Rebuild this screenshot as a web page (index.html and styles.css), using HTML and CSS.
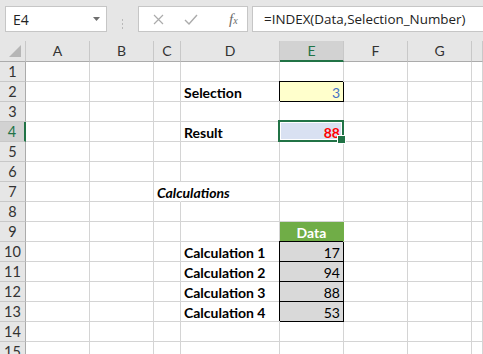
FILE: index.html
```html
<!DOCTYPE html>
<html lang="en">
<head>
    <meta charset="UTF-8">
    <meta name="viewport" content="width=device-width, initial-scale=1.0">
    <link rel="stylesheet" href="styles.css">
</head>
<body>
    <div class="toolbar">
        <div class="namebox">
            <span>E4</span>
            <svg class="drop" width="7" height="4" viewBox="0 0 7 4"><path d="M0 0h7L3.5 4z" fill="#6e6e6e"/></svg>
        </div>
        <div class="sep">
            <svg width="3" height="12" viewBox="0 0 3 12"><rect x="1" y="1" width="1" height="2" fill="#b9b9b9"/><rect x="1" y="5" width="1" height="2" fill="#b9b9b9"/><rect x="1" y="9" width="1" height="2" fill="#b9b9b9"/></svg>
        </div>
        <div class="fnbox">
            <svg width="11" height="11" viewBox="0 0 11 11"><path d="M1 1l9 9M10 1l-9 9" stroke="#ababab" stroke-width="1.2"/></svg>
            <svg width="14" height="11" viewBox="0 0 14 11"><path d="M1 6l4 4 8-9" stroke="#ababab" stroke-width="1.4" fill="none"/></svg>
            <span class="fx">f<sub>x</sub></span>
        </div>
        <div class="formula">=INDEX(Data,Selection_Number)</div>
    </div>

    <div class="sheet">
        <div class="ch corner"><span class="tri"></span></div><div class="ch">A</div><div class="ch">B</div><div class="ch">C</div><div class="ch">D</div><div class="ch active">E</div><div class="ch">F</div><div class="ch">G</div><div class="ch"></div>

        <div class="rh">1</div><div class="c"></div><div class="c"></div><div class="c"></div><div class="c"></div><div class="c"></div><div class="c"></div><div class="c"></div><div class="c"></div>
        <div class="rh">2</div><div class="c"></div><div class="c"></div><div class="c"></div><div class="c lbl">Selection</div><div class="c num input">3</div><div class="c"></div><div class="c"></div><div class="c"></div>
        <div class="rh">3</div><div class="c"></div><div class="c"></div><div class="c"></div><div class="c"></div><div class="c"></div><div class="c"></div><div class="c"></div><div class="c"></div>
        <div class="rh active">4</div><div class="c"></div><div class="c"></div><div class="c"></div><div class="c lbl">Result</div><div class="c num result sel">88</div><div class="c"></div><div class="c"></div><div class="c"></div>
        <div class="rh">5</div><div class="c"></div><div class="c"></div><div class="c"></div><div class="c"></div><div class="c"></div><div class="c"></div><div class="c"></div><div class="c"></div>
        <div class="rh">6</div><div class="c"></div><div class="c"></div><div class="c"></div><div class="c"></div><div class="c"></div><div class="c"></div><div class="c"></div><div class="c"></div>
        <div class="rh">7</div><div class="c"></div><div class="c"></div><div class="c lbl title">Calculations</div><div class="c"></div><div class="c"></div><div class="c"></div><div class="c"></div><div class="c"></div>
        <div class="rh">8</div><div class="c"></div><div class="c"></div><div class="c"></div><div class="c"></div><div class="c"></div><div class="c"></div><div class="c"></div><div class="c"></div>
        <div class="rh">9</div><div class="c"></div><div class="c"></div><div class="c"></div><div class="c"></div><div class="c data-head">Data</div><div class="c"></div><div class="c"></div><div class="c"></div>
        <div class="rh">10</div><div class="c"></div><div class="c"></div><div class="c"></div><div class="c lbl">Calculation 1</div><div class="c num data">17</div><div class="c"></div><div class="c"></div><div class="c"></div>
        <div class="rh">11</div><div class="c"></div><div class="c"></div><div class="c"></div><div class="c lbl">Calculation 2</div><div class="c num data">94</div><div class="c"></div><div class="c"></div><div class="c"></div>
        <div class="rh">12</div><div class="c"></div><div class="c"></div><div class="c"></div><div class="c lbl">Calculation 3</div><div class="c num data">88</div><div class="c"></div><div class="c"></div><div class="c"></div>
        <div class="rh">13</div><div class="c"></div><div class="c"></div><div class="c"></div><div class="c lbl">Calculation 4</div><div class="c num data">53</div><div class="c"></div><div class="c"></div><div class="c"></div>
        <div class="rh">14</div><div class="c"></div><div class="c"></div><div class="c"></div><div class="c"></div><div class="c"></div><div class="c"></div><div class="c"></div><div class="c"></div>
        <div class="rh">15</div><div class="c"></div><div class="c"></div><div class="c"></div><div class="c"></div><div class="c"></div><div class="c"></div><div class="c"></div><div class="c"></div>
    </div>
</body>
</html>
```

FILE: styles.css
```css
* {
    box-sizing: border-box;
}
body {
    margin: 0;
    width: 483px;
    height: 354px;
    overflow: hidden;
    background-color: #ffffff;
    font-family: Lato, "Open Sans", sans-serif;
}
.toolbar {
    display: flex;
    height: 41px;
    padding: 6px 0 0 5px;
    background-color: #e6e6e6;
}
.namebox,
.fnbox,
.formula {
    height: 26px;
    background-color: #ffffff;
    border: 1px solid #c6c6c6;
}
.namebox {
    width: 102px;
    display: flex;
    align-items: center;
    justify-content: space-between;
    padding: 0 6px 0 7px;
    font-family: "Open Sans", sans-serif;
    font-size: 14px;
    color: #222222;
}
.sep {
    width: 31px;
    display: flex;
    align-items: center;
    justify-content: center;
}
.fnbox {
    width: 110px;
    display: flex;
    align-items: center;
    padding: 0 0 0 14px;
    gap: 20px;
}
.fx {
    margin-left: 11px;
    font-family: "Liberation Serif", serif;
    font-style: italic;
    font-size: 15px;
    color: #6b6b6b;
}
.fx sub {
    font-size: 10px;
    vertical-align: 0;
}
.formula {
    flex: 1;
    margin-left: 4px;
    border-right: none;
    padding: 0 0 0 11px;
    font-family: "Open Sans", sans-serif;
    font-size: 13.4px;
    line-height: 24px;
    color: #222222;
    white-space: nowrap;
}
.sheet {
    display: grid;
    grid-template-columns: 26px 64px 64px 27px 99px 64px 64px 64px 1fr;
    grid-template-rows: 21px repeat(15, 20px);
    font-size: 14px;
}
.ch,
.rh {
    background-color: #e6e6e6;
    color: #333333;
    text-align: center;
    border-right: 1px solid #c8c8c8;
    border-bottom: 1px solid #c8c8c8;
}
.ch {
    line-height: 20px;
    border-bottom-color: #ababab;
}
.rh {
    line-height: 20px;
    font-size: 14.5px;
    border-right-color: #ababab;
}
.ch.active,
.rh.active {
    background-color: #d2d2d2;
    color: #217346;
}
.ch.active {
    border-bottom: 2px solid #217346;
}
.rh.active {
    border-right: 2px solid #217346;
}
.corner {
    position: relative;
}
.tri {
    position: absolute;
    right: 4px;
    bottom: 4px;
    width: 0;
    height: 0;
    border-left: 12px solid transparent;
    border-bottom: 12px solid #b6b6b6;
}
.c {
    border-right: 1px solid #d4d4d4;
    border-bottom: 1px solid #d4d4d4;
    padding: 1px 3px 0;
    line-height: 20px;
    white-space: nowrap;
    color: #000000;
}
.lbl {
    font-weight: bold;
}
.title {
    font-style: italic;
    border-right-color: #ffffff;
}
.num {
    text-align: right;
}
.input {
    background-color: #ffffcc;
    color: #4472c4;
    border-color: #000000;
    box-shadow: -1px -1px 0 0 #000000;
}
.result {
    background-color: #d9e1f2;
    color: #ff0000;
    font-weight: bold;
}
.sel {
    position: relative;
}
.sel::after {
    content: '';
    position: absolute;
    left: -2px;
    top: -2px;
    right: -1px;
    bottom: -1px;
    border: 2px solid #217346;
    box-shadow: inset 0 0 0 1px #ffffff;
}
.sel::before {
    content: '';
    position: absolute;
    right: -3px;
    bottom: -3px;
    width: 7px;
    height: 7px;
    background-color: #217346;
    border: 1px solid #ffffff;
    z-index: 1;
}
.data-head {
    background-color: #70ad47;
    color: #ffffff;
    font-weight: bold;
    text-align: center;
    border-right-color: #70ad47;
}
.data {
    background-color: #d9d9d9;
    border-color: #000000;
    box-shadow: -1px -1px 0 0 #000000;
}
```
